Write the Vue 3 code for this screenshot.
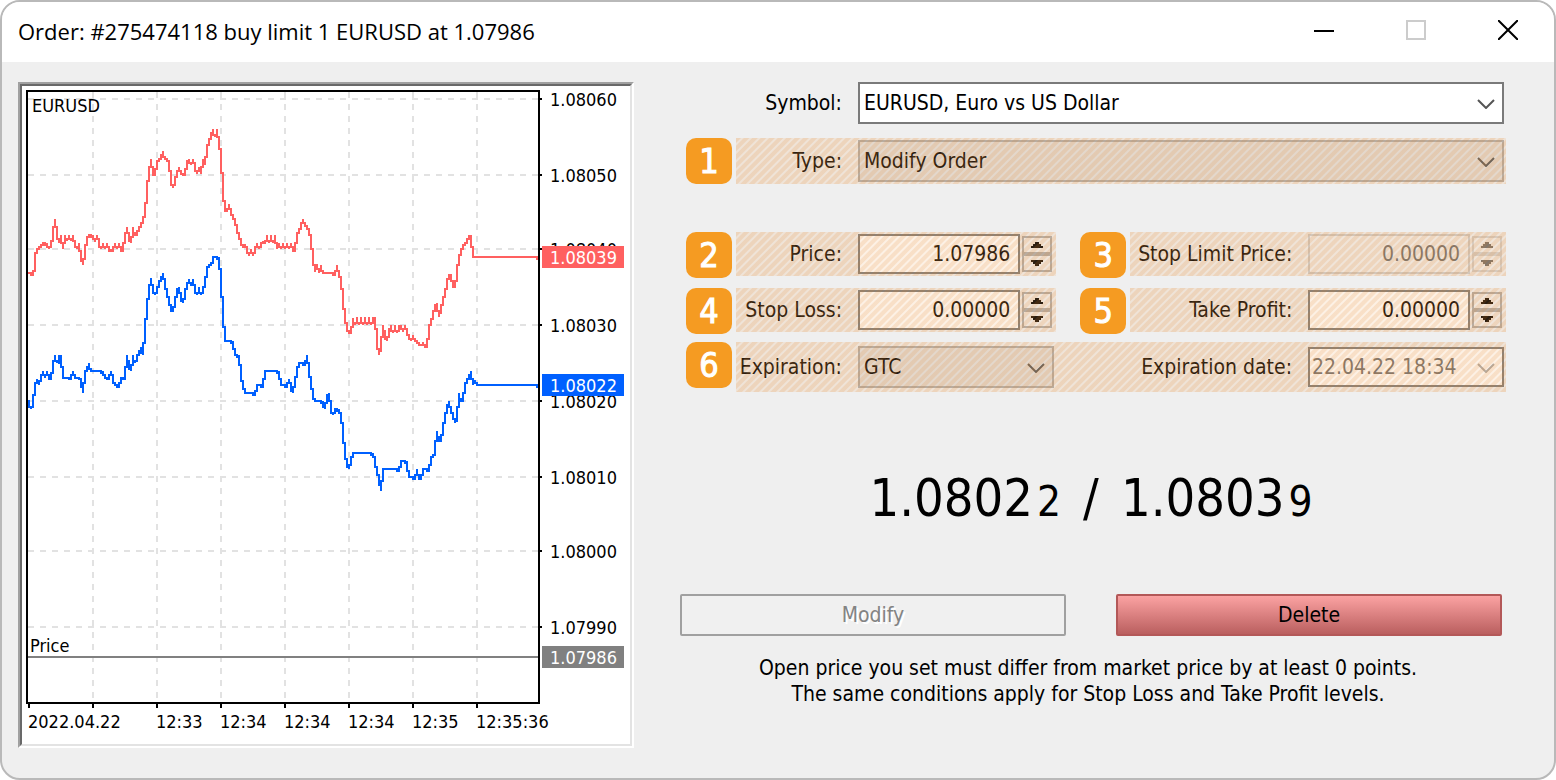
<script setup>
import { ref } from 'vue'

const symbol = ref('EURUSD, Euro vs US Dollar')
const type = ref('Modify Order')
const price = ref('1.07986')
const stopLimit = ref('0.00000')
const stopLoss = ref('0.00000')
const takeProfit = ref('0.00000')
const expiration = ref('GTC')
const expirationDate = ref('22.04.22 18:34')

const columns = [93, 157, 221, 285, 349, 413, 477]
const levels = [
  { y: 99, text: '1.08060' },
  { y: 175, text: '1.08050' },
  { y: 249, text: '1.08040' },
  { y: 325, text: '1.08030' },
  { y: 401, text: '1.08020' },
  { y: 477, text: '1.08010' },
  { y: 551, text: '1.08000' },
  { y: 627, text: '1.07990' },
]
const times = [
  { x: 28, text: '2022.04.22' },
  { x: 156, text: '12:33' },
  { x: 220, text: '12:34' },
  { x: 284, text: '12:34' },
  { x: 348, text: '12:34' },
  { x: 412, text: '12:35' },
  { x: 476, text: '12:35:36' },
]
const tags = [
  { y: 257, text: '1.08039', kind: 'ask' },
  { y: 385, text: '1.08022', kind: 'bid' },
  { y: 657, text: '1.07986', kind: 'order' },
]

const askTicks =
  '29,273 33,273 35,266 35,256 37,248 39,248 41,245 43,243 47,243 49,249 51,244 53,234 55,219 57,232 59,243 61,235 63,249 65,235 67,241 69,235 71,241 73,235 75,243 77,249 79,243 81,256 83,265 85,252 87,236 89,235 93,235 95,242 97,235 99,242 101,249 103,243 105,249 107,243 109,249 111,249 113,249 115,243 117,249 119,243 121,249 123,249 125,235 127,227 129,235 131,243 133,227 135,235 137,233 139,228 141,225 143,220 145,212 147,190 149,171 151,159 153,173 155,174 157,160 159,159 161,157 163,151 165,159 169,160 171,178 173,188 175,179 177,174 179,167 181,174 185,174 187,162 189,159 191,165 193,159 195,166 197,174 199,167 201,174 203,159 205,165 207,145 209,143 211,133 213,129 215,137 217,129 219,143 221,152 223,190 225,208 227,211 229,204 231,211 233,217 235,219 237,230 239,234 241,241 243,248 245,244 247,249 249,256 251,249 253,256 255,249 257,243 259,249 261,243 263,241 265,243 267,235 269,243 271,235 273,243 275,235 277,249 279,243 281,249 283,243 285,249 287,243 289,249 291,243 293,249 295,249 297,235 299,230 301,225 303,219 305,226 309,228 311,240 313,256 315,272 317,264 319,273 321,265 323,273 335,273 337,265 339,273 341,277 343,297 345,318 347,327 349,332 351,332 353,318 355,325 357,317 359,325 361,317 363,325 365,317 367,325 369,317 371,325 373,317 375,317 377,340 379,355 381,345 383,325 385,334 387,341 389,332 391,325 393,333 395,325 397,333 399,325 401,325 403,332 405,325 407,332 409,335 411,341 413,335 415,339 417,341 419,342 421,346 423,342 425,346 427,346 429,330 431,318 433,316 435,305 437,303 439,317 441,306 443,300 445,293 447,282 449,275 451,274 453,284 455,287 457,272 459,256 461,250 463,245 465,243 467,239 469,235 471,235 473,257 539,257'

const bidTicks =
  '29,401 31,409 33,403 35,384 37,379 39,385 41,375 43,371 45,378 47,371 49,378 51,378 53,365 55,355 57,363 59,355 61,368 61,355 63,378 71,378 73,371 75,378 81,378 83,393 85,371 87,370 89,363 91,371 103,371 105,378 109,378 111,371 113,378 115,385 119,385 121,378 125,378 127,355 129,366 131,371 133,355 135,363 137,356 139,353 141,347 143,355 145,328 147,307 149,290 151,278 153,290 155,295 157,288 159,283 161,277 163,273 165,283 167,292 169,300 171,307 173,311 175,300 177,290 179,287 181,297 183,303 185,291 187,283 189,279 191,286 193,279 195,290 197,295 199,287 201,295 203,288 205,283 207,268 209,265 213,257 219,257 221,280 223,313 225,337 227,341 233,341 235,355 239,355 241,373 243,385 245,389 247,393 255,393 257,385 263,385 265,371 279,371 281,385 287,385 289,379 291,386 293,393 295,380 297,370 299,363 305,363 307,355 309,370 311,382 313,393 315,401 323,401 325,409 327,396 329,393 331,407 333,415 335,409 339,409 341,413 343,430 345,453 347,462 349,469 351,457 353,453 373,453 375,460 377,470 379,477 381,491 383,469 399,469 401,461 407,461 409,477 415,477 417,469 419,477 421,477 423,469 429,469 431,457 435,450 437,431 439,439 441,439 443,427 445,417 447,408 449,401 451,409 453,413 455,423 457,417 459,393 461,401 463,400 465,383 467,379 469,375 471,371 473,385 475,380 477,385 539,385'

// Joins ticks on a 2-unit grid: each move is split half-way between its two columns.
function stepped(ticks) {
  const points = ticks.split(' ').map((p) => p.split(',').map(Number))
  let [x, y] = points[0]
  let d = `M${x - 1} ${y}H${x}`
  for (const [nx, ny] of points.slice(1)) {
    const mid = Math.round((y + ny) / 4) * 2 + 1
    if (nx - x > 2) d += `H${nx - 2}`
    d += `V${mid}H${nx}V${ny}`
    x = nx
    y = ny
  }
  return d
}
const askLine = stepped(askTicks)
const bidLine = stepped(bidTicks)
</script>

<template>
  <main class="dialog">
    <header class="titlebar">
      <h1>Order: #275474118 buy limit 1 EURUSD at 1.07986</h1>
      <div class="window-buttons">
        <button type="button" aria-label="Minimize">
          <svg width="20" height="20"><path d="M0 11H20" stroke="#000" stroke-width="2" /></svg>
        </button>
        <button type="button" aria-label="Maximize" disabled>
          <svg width="20" height="20"><path d="M1 1H19V19H1Z" fill="none" stroke="#ccc" stroke-width="2" /></svg>
        </button>
        <button type="button" aria-label="Close">
          <svg width="20" height="20"><path d="M0 0L20 20M20 0L0 20" stroke="#000" stroke-width="2" /></svg>
        </button>
      </div>
    </header>

    <div class="body">
      <section class="chart" aria-label="EURUSD tick chart">
        <div class="chart-inner">
          <svg viewBox="22 86 608 658" class="plot">
            <g class="grid">
              <path v-for="l in levels" :key="l.y" :d="`M28 ${l.y}H538`" />
              <path v-for="x in columns" :key="x" :d="`M${x} 92V702`" />
            </g>
            <path class="order-line" d="M28 657H538" />
            <path class="ask-line" :d="askLine" />
            <path class="bid-line" :d="bidLine" />
            <path class="frame" d="M27 91H539V703H27Z" />
            <path v-for="l in levels" :key="'t' + l.y" class="frame" :d="`M540 ${l.y}H542`" />
            <path v-for="x in [29, ...columns]" :key="'t' + x" class="frame" :d="`M${x} 704V708`" />
            <text x="32" y="112">EURUSD</text>
            <text x="30" y="652">Price</text>
            <text v-for="l in levels" :key="l.text" x="550" :y="l.y + 7">{{ l.text }}</text>
            <text v-for="t in times" :key="t.x" :x="t.x" y="728">{{ t.text }}</text>
            <g v-for="t in tags" :key="t.kind">
              <rect :class="t.kind" x="542" :y="t.y - 11" width="82" height="22" />
              <text class="tag-text" x="550" :y="t.y + 7">{{ t.text }}</text>
            </g>
          </svg>
        </div>
      </section>

      <form class="form" @submit.prevent>
        <div class="row symbol-row">
          <div class="band plain">
            <label class="label" for="symbol">Symbol:</label>
            <div class="picker">
              <select id="symbol" v-model="symbol"><option>EURUSD, Euro vs US Dollar</option></select>
              <svg class="chevron" width="18" height="10"><path d="M1 1L9 9L17 1" /></svg>
            </div>
          </div>
        </div>

        <div class="row type-row">
          <span class="badge">1</span>
          <div class="band hatched">
            <label class="label" for="type">Type:</label>
            <div class="picker flat">
              <select id="type" v-model="type"><option>Modify Order</option></select>
              <svg class="chevron" width="18" height="10"><path d="M1 1L9 9L17 1" /></svg>
            </div>
          </div>
        </div>

        <div class="row">
          <span class="badge">2</span>
          <div class="band hatched left">
            <label class="label" for="price">Price:</label>
            <input id="price" v-model="price" type="text" />
            <span class="spinner">
              <button type="button" aria-label="Increase price"><svg width="12" height="6"><path d="M0 6V4H2V2H4V0H8V2H10V4H12V6Z" /></svg></button>
              <button type="button" aria-label="Decrease price"><svg width="12" height="6"><path d="M0 0V2H2V4H4V6H8V4H10V2H12V0Z" /></svg></button>
            </span>
          </div>
          <span class="badge second">3</span>
          <div class="band hatched right">
            <label class="label" for="stop-limit">Stop Limit Price:</label>
            <input id="stop-limit" v-model="stopLimit" type="text" disabled />
            <span class="spinner">
              <button type="button" aria-label="Increase stop limit price" disabled><svg width="12" height="6"><path d="M0 6V4H2V2H4V0H8V2H10V4H12V6Z" /></svg></button>
              <button type="button" aria-label="Decrease stop limit price" disabled><svg width="12" height="6"><path d="M0 0V2H2V4H4V6H8V4H10V2H12V0Z" /></svg></button>
            </span>
          </div>
        </div>

        <div class="row stop-row">
          <span class="badge">4</span>
          <div class="band hatched left">
            <label class="label" for="stop-loss">Stop Loss:</label>
            <input id="stop-loss" v-model="stopLoss" type="text" />
            <span class="spinner">
              <button type="button" aria-label="Increase stop loss"><svg width="12" height="6"><path d="M0 6V4H2V2H4V0H8V2H10V4H12V6Z" /></svg></button>
              <button type="button" aria-label="Decrease stop loss"><svg width="12" height="6"><path d="M0 0V2H2V4H4V6H8V4H10V2H12V0Z" /></svg></button>
            </span>
          </div>
          <span class="badge second">5</span>
          <div class="band hatched right">
            <label class="label" for="take-profit">Take Profit:</label>
            <input id="take-profit" v-model="takeProfit" type="text" />
            <span class="spinner">
              <button type="button" aria-label="Increase take profit"><svg width="12" height="6"><path d="M0 6V4H2V2H4V0H8V2H10V4H12V6Z" /></svg></button>
              <button type="button" aria-label="Decrease take profit"><svg width="12" height="6"><path d="M0 0V2H2V4H4V6H8V4H10V2H12V0Z" /></svg></button>
            </span>
          </div>
        </div>

        <div class="row expiration-row">
          <span class="badge">6</span>
          <div class="band hatched">
            <label class="label" for="expiration">Expiration:</label>
            <div class="picker flat">
              <select id="expiration" v-model="expiration"><option>GTC</option></select>
              <svg class="chevron" width="18" height="10"><path d="M1 1L9 9L17 1" /></svg>
            </div>
            <label class="label date-label" for="expiration-date">Expiration date:</label>
            <div class="picker date">
              <input id="expiration-date" v-model="expirationDate" type="text" disabled />
              <svg class="chevron" width="18" height="10"><path d="M1 1L9 9L17 1" /></svg>
            </div>
          </div>
        </div>

        <p class="quote">
          <span>1.0802<small>2</small></span>
          <span>/</span>
          <span>1.0803<small>9</small></span>
        </p>

        <div class="actions">
          <button type="submit" class="modify" disabled>Modify</button>
          <button type="button" class="delete">Delete</button>
        </div>

        <p class="note">
          Open price you set must differ from market price by at least 0 points.<br />
          The same conditions apply for Stop Loss and Take Profit levels.
        </p>
      </form>
    </div>
  </main>
</template>

<style>
body {
  margin: 0;
  background: #fff;
}
</style>

<style scoped>
.dialog,
.dialog * {
  box-sizing: border-box;
}
.dialog {
  border: 2px solid #b9b9b9;
  border-radius: 20px;
  overflow: hidden;
  background: #efefef;
  color: #000;
  font-family: "DejaVu Sans Condensed", "DejaVu Sans", sans-serif;
  font-size: 21px;
  line-height: 26px;
}
.titlebar {
  display: flex;
  justify-content: space-between;
  align-items: flex-start;
  height: 60px;
  padding-left: 16px;
  background: #fff;
}
h1 {
  margin: 0;
  font: 400 22px/58px "Open Sans", sans-serif;
}
.window-buttons {
  display: flex;
}
.window-buttons button {
  display: flex;
  justify-content: center;
  align-items: center;
  width: 92px;
  height: 56px;
  padding: 0;
  border: 0;
  background: none;
}
.body {
  display: flex;
  align-items: flex-start;
  gap: 46px;
  padding: 20px 48px 30px 16px;
}
.chart {
  flex: 0 0 616px;
  border: 2px solid;
  border-color: #a0a0a0 #fff #fff #a0a0a0;
}
.chart-inner {
  border: 2px solid;
  border-color: #696969 #e3e3e3 #e3e3e3 #696969;
  background: #fff;
}
.plot {
  display: block;
  width: 100%;
}
.plot path {
  fill: none;
  stroke-width: 2px;
  shape-rendering: crispEdges;
}
.plot text {
  font-size: 18px;
}
.grid path {
  stroke: #e2e2e2;
  stroke-dasharray: 6 6;
}
.plot .frame {
  stroke: #000;
}
.order-line {
  stroke: #808080;
}
.ask-line {
  stroke: #ff6060;
}
.bid-line {
  stroke: #0060ff;
}
.ask {
  fill: #ff6060;
}
.bid {
  fill: #0060ff;
}
.order {
  fill: #808080;
}
.plot .tag-text {
  fill: #fff;
}

.form {
  flex: 1;
  min-width: 0;
}
.row {
  display: flex;
  align-items: flex-start;
  gap: 4px;
  padding-left: 6px;
}
.symbol-row {
  padding-left: 56px;
}
.type-row {
  margin: 14px 0 48px;
}
.stop-row {
  margin: 10px 0 8px;
}
.badge {
  flex: 0 0 46px;
  height: 46px;
  border-radius: 10px;
  background: #f59b22;
  color: #fff;
  font-size: 34px;
  line-height: 46px;
  text-align: center;
  -webkit-text-stroke: 1px #fff;
}
.second {
  margin-left: 20px;
}
.band {
  position: relative;
  display: flex;
  flex: 1;
  align-items: center;
  min-width: 0;
  padding: 2px;
  padding-left: 0;
}
.plain {
  padding: 0 2px 0 0;
}
.left,
.right {
  padding-right: 4px;
}
.left {
  flex: 320 1 0;
}
.right {
  flex: 376 1 0;
}
.expiration-row .band {
  padding: 4px 2px 4px 0;
}
.hatched::after {
  content: "";
  position: absolute;
  inset: 0;
  pointer-events: none;
  background: repeating-linear-gradient(
    135deg,
    rgba(232, 146, 62, 0.29) 0 3px,
    rgba(240, 170, 100, 0.17) 4px 5px,
    rgba(232, 146, 62, 0.29) 6px
  );
}
.label {
  flex: 0 0 106px;
  margin-right: 16px;
  text-align: right;
  white-space: nowrap;
}
.right .label {
  flex-basis: 162px;
}
.date-label {
  flex-basis: 238px;
}
.picker {
  position: relative;
  flex: 1;
  min-width: 0;
}
select,
input {
  display: block;
  width: 100%;
  margin: 0;
  border: 2px solid #7a7a7a;
  border-radius: 0;
  background: #fff;
  color: #000;
  font: inherit;
}
select {
  height: 42px;
  padding: 0 40px 0 4px;
  appearance: none;
}
input {
  flex: 1;
  min-width: 0;
  height: 40px;
  padding: 0 8px;
  text-align: right;
}
input:disabled {
  border-color: #ccc;
  background: #f0f0f0;
  color: #6d6d6d;
}
.flat select {
  border-color: #adadad;
  background: #e1e1e1;
}
.date input:disabled {
  padding: 0 36px 0 2px;
  border-color: #7a7a7a;
  background: #fff;
  text-align: left;
}
.chevron {
  position: absolute;
  top: 50%;
  right: 9px;
  margin-top: -4px;
  pointer-events: none;
}
.chevron path {
  fill: none;
  stroke: #555;
  stroke-width: 2px;
}
.date .chevron path {
  stroke: #aaa;
}
.spinner {
  display: flex;
  flex: 0 0 30px;
  flex-direction: column;
  margin-left: 2px;
}
.spinner button {
  display: flex;
  justify-content: center;
  align-items: center;
  height: 18px;
  padding: 0;
  border: 2px solid #adadad;
  background: #f0f0f0;
}
.spinner button:disabled {
  border-color: #d2d2d2;
}
.spinner button:disabled path {
  fill: #6d6d6d;
}
.quote {
  display: flex;
  justify-content: center;
  align-items: baseline;
  gap: 22px;
  margin: 76px 0 62px;
  padding-right: 4px;
  font-size: 52px;
  line-height: 60px;
  white-space: nowrap;
}
.quote small {
  margin-left: 4px;
  font-size: 42px;
}
.actions {
  display: flex;
  gap: 50px;
  padding-right: 4px;
}
.actions button {
  flex: 1;
  height: 42px;
  padding: 0;
  border: 2px solid #a0a0a0;
  border-radius: 2px;
  background: #f0f0f0;
  font: inherit;
}
.actions .modify {
  color: #838383;
  text-shadow: 2px 2px 0 #fff;
}
.actions .delete {
  border-color: #b35858;
  background: linear-gradient(#fba2a2, #ba5f5f);
  color: #000;
}
.note {
  margin: 19px 0 0;
  padding-right: 10px;
  text-align: center;
}
</style>
